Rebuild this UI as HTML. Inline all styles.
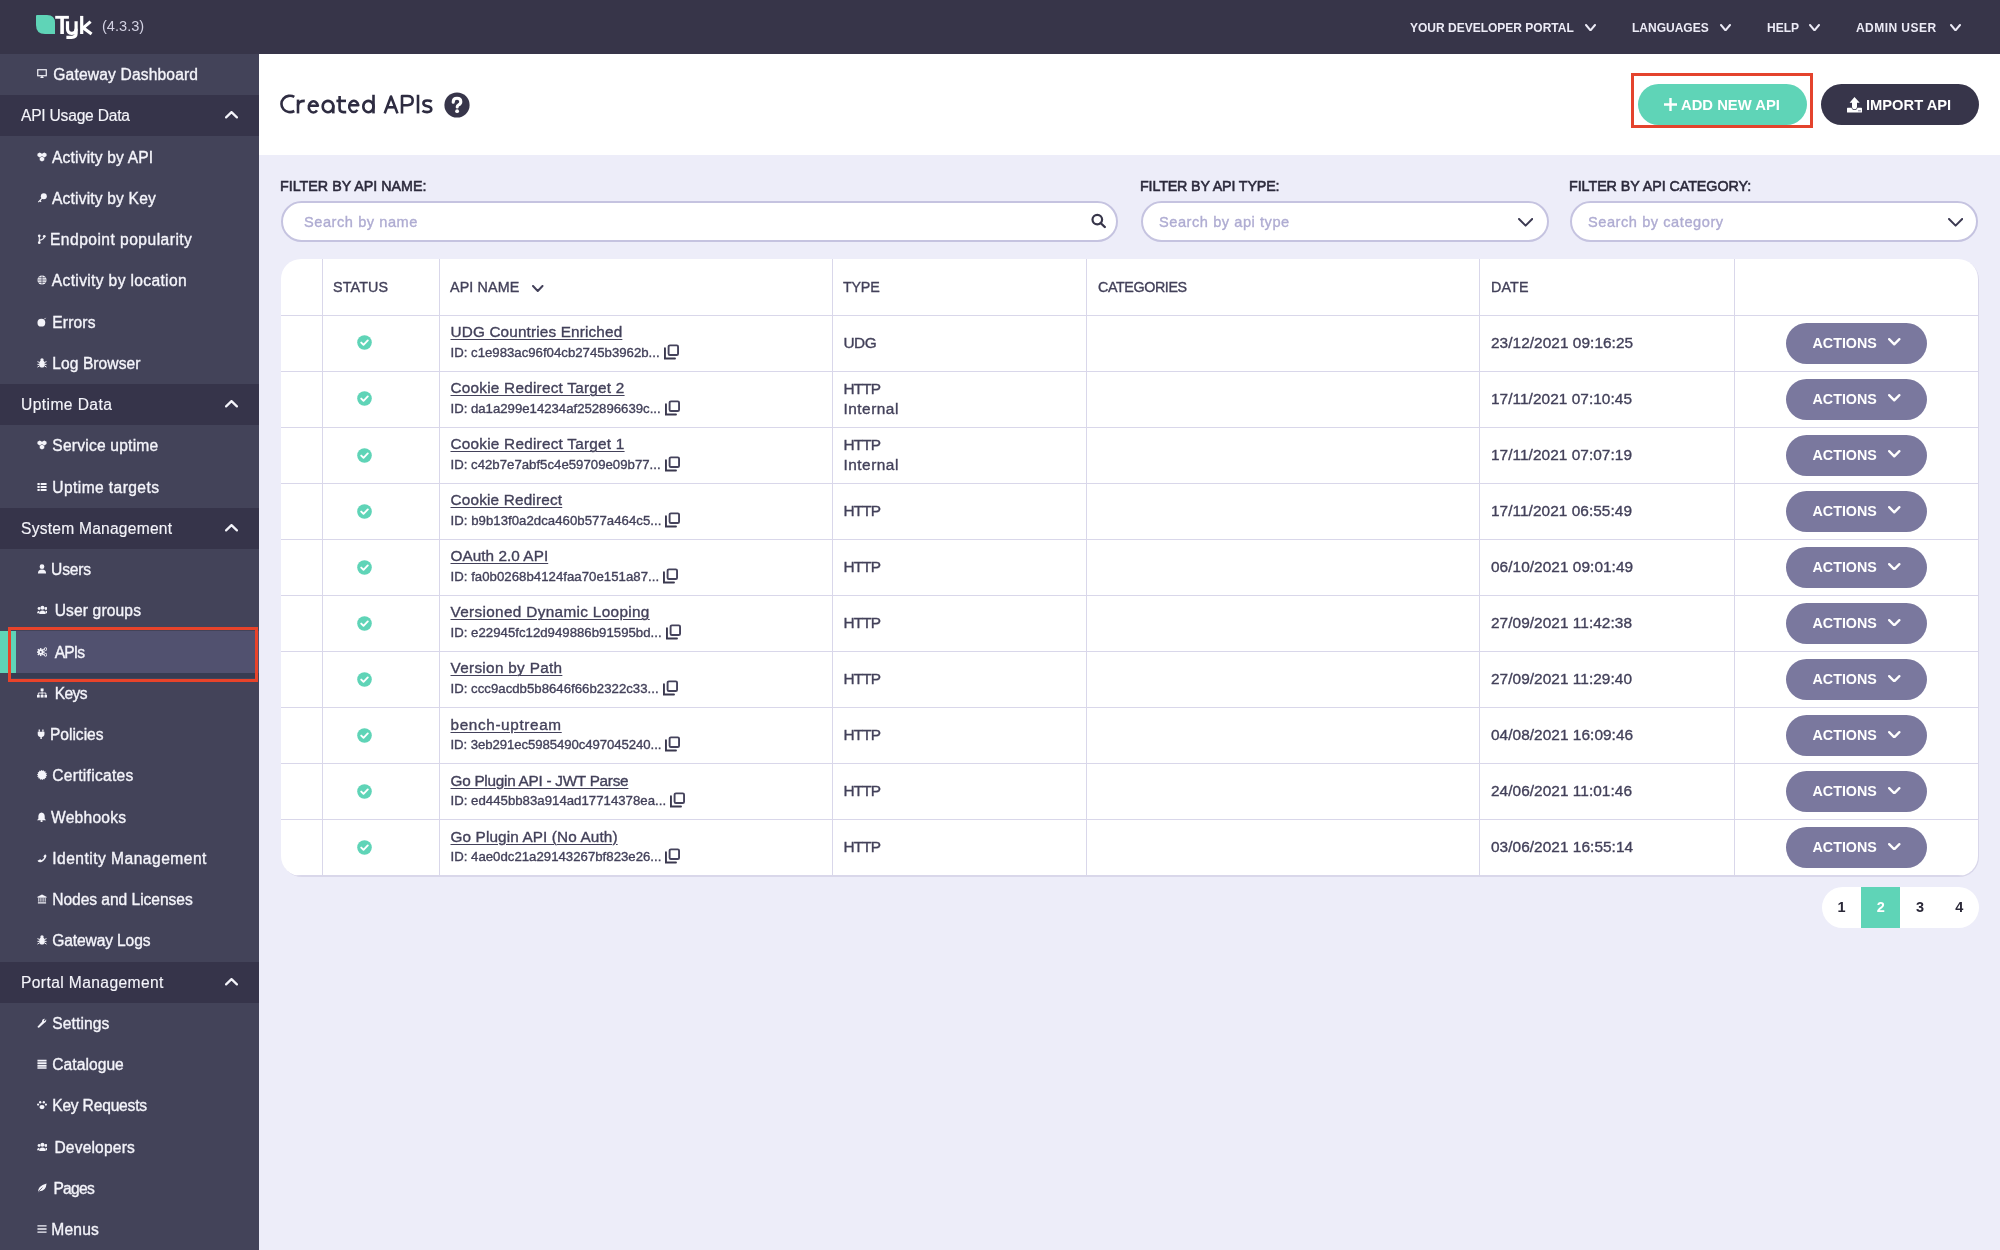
<!DOCTYPE html>
<html><head><meta charset="utf-8"><title>Created APIs</title><style>
*{box-sizing:border-box;margin:0;padding:0}
html,body{width:2000px;height:1250px;overflow:hidden;background:#ededf9;font-family:"Liberation Sans",sans-serif;-webkit-font-smoothing:antialiased}
body>div,body>svg{will-change:transform}
.si,.td,.th,.ph,.nm,.id{-webkit-text-stroke:0.35px currentColor}
.si,.th,.ph,.nm,.td{letter-spacing:0.15px}
.abs{position:absolute}
.hdr{left:0;top:0;width:2000px;height:54px;background:#373549}
.sb{left:0;top:54px;width:259px;height:1196px;background:#434359}
.si{position:absolute;left:0;width:259px;height:41.25px;color:#f4f4fa;font-size:15.6px;line-height:41.25px;white-space:nowrap}
.si .t{position:absolute;top:0}
.si .ic{position:absolute;left:37px;top:15.4px;width:10px;height:10px}
.sec{background:#36344a;font-size:15.6px;-webkit-text-stroke:0.15px currentColor !important}
.sec .t{left:21px}
.nav{position:absolute;top:1px;height:54px;line-height:54px;color:#ecebf6;font-weight:bold;font-size:12px;white-space:nowrap}
.pghdr{left:259px;top:54px;width:1741px;height:101px;background:#fff}
.lbl{position:absolute;top:176px;font-size:14.3px;color:#2c2a3c;line-height:20px;white-space:nowrap;-webkit-text-stroke:0.55px #2c2a3c}
.inp{position:absolute;top:201px;height:41px;background:#fff;border:2px solid #c5c3e0;border-radius:21px}
.ph{position:absolute;top:0.8px;line-height:37px;font-size:14.6px;color:#afacd2;white-space:nowrap;letter-spacing:0.55px !important}
.card{left:281px;top:259px;width:1697px;height:617px;background:#fff;border-radius:20px;box-shadow:1px 1px 0 #d9d7ea;overflow:hidden}
.vl{position:absolute;top:0;width:1px;height:617px;background:#d9d7ea}
.hl{position:absolute;left:0;width:1697px;height:1px;background:#d9d7ea}
.th{position:absolute;top:0;height:56px;line-height:56px;font-size:14.3px;color:#43415a;white-space:nowrap}
.td{position:absolute;font-size:15.4px;color:#43415a;white-space:nowrap}
.nm{font-size:15.3px;color:#43415a;text-decoration:underline;text-underline-offset:2px;text-decoration-thickness:1px}
.id{font-size:13.2px;color:#43415a}
.abtn{position:absolute;left:1505px;width:141px;height:41px;border-radius:21px;background:#7a789e;color:#fff;font-weight:bold;font-size:14.3px;line-height:41px}
</style></head>
<body>
<div class="abs hdr"></div>
<svg class="abs" style="left:36px;top:15px" width="20" height="20" viewBox="0 0 20 20"><path d="M1 0 H11 Q19 0 19 8 V19 H9 Q0 19 0 10 V1 Q0 0 1 0Z" fill="#5fd4b7"/></svg>
<svg class="abs" style="left:0;top:0" width="100" height="45" viewBox="0 0 100 45"><g fill="none" stroke="#fff" stroke-width="3.2"><path d="M55.2 17.3 H68.9" stroke-width="2.9"/><path d="M62.1 17.3 V34" stroke-width="3.6"/><path d="M67.5 21.3 V28.8 Q67.5 33.3 71.8 33.3 Q76.1 33.3 76.1 28.8"/><path d="M76.1 21.3 V33.6 Q76.1 37.3 71.6 37.3 H66.4"/><path d="M81.7 15.9 V34"/><path d="M90.6 21.6 L83.2 27.9 L91.6 34" stroke-linejoin="miter"/></g></svg>
<div class="abs" style="left:102px;top:16px;font-size:14.6px;color:#d2d1e2;line-height:20px">(4.3.3)</div>
<div class="nav" style="left:1409.5px;letter-spacing:0px">YOUR DEVELOPER PORTAL</div>
<svg class="abs" style="left:1584.8999999999999px;top:23.7px" width="11" height="7.4" viewBox="0 0 11 7.4"><path d="M1.0 1.0 L5.5 6.4 L10.0 1.0" fill="none" stroke="#ecebf6" stroke-width="2" stroke-linecap="round" stroke-linejoin="round"/></svg>
<div class="nav" style="left:1632px;letter-spacing:0px">LANGUAGES</div>
<svg class="abs" style="left:1719.7px;top:23.7px" width="11" height="7.4" viewBox="0 0 11 7.4"><path d="M1.0 1.0 L5.5 6.4 L10.0 1.0" fill="none" stroke="#ecebf6" stroke-width="2" stroke-linecap="round" stroke-linejoin="round"/></svg>
<div class="nav" style="left:1767px;letter-spacing:0px">HELP</div>
<svg class="abs" style="left:1809.3px;top:23.7px" width="11" height="7.4" viewBox="0 0 11 7.4"><path d="M1.0 1.0 L5.5 6.4 L10.0 1.0" fill="none" stroke="#ecebf6" stroke-width="2" stroke-linecap="round" stroke-linejoin="round"/></svg>
<div class="nav" style="left:1856px;letter-spacing:0.45px">ADMIN USER</div>
<svg class="abs" style="left:1950.0px;top:23.7px" width="11" height="7.4" viewBox="0 0 11 7.4"><path d="M1.0 1.0 L5.5 6.4 L10.0 1.0" fill="none" stroke="#ecebf6" stroke-width="2" stroke-linecap="round" stroke-linejoin="round"/></svg>
<div class="abs sb"></div>
<div class="si" style="top:54.0px"><svg class="ic" viewBox="0 0 11 11"><rect x="0.8" y="0.8" width="9.4" height="6.6" fill="none" stroke="#f4f4fa" stroke-width="1.3"/><path d="M3.5 10 H7.5 L6.5 8 H4.5Z" fill="#f4f4fa"/></svg><span class="t" style="left:53.3px;letter-spacing:0.162px">Gateway Dashboard</span></div>
<div class="si sec" style="top:95.25px"><span class="t" style="letter-spacing:-0.223px">API Usage Data</span></div>
<svg class="abs" style="left:225px;top:111.35px" width="13" height="7.5" viewBox="0 0 13 7.5"><path d="M1.1 6.4 L6.5 1.1 L11.9 6.4" fill="none" stroke="#f4f4fa" stroke-width="2.2" stroke-linecap="round" stroke-linejoin="round"/></svg>
<div class="si" style="top:136.5px"><svg class="ic" viewBox="0 0 11 11"><path d="M3 0.5 L5.5 2 V4.5 L3 6 L0.5 4.5 V2Z M8 0.5 L10.5 2 V4.5 L8 6 L5.5 4.5 V2Z M5.5 5 L8 6.5 V9 L5.5 10.5 L3 9 V6.5Z" fill="#f4f4fa"/></svg><span class="t" style="left:52px;letter-spacing:0.171px">Activity by API</span></div>
<div class="si" style="top:177.75px"><svg class="ic" viewBox="0 0 11 11"><circle cx="7.5" cy="3.5" r="3.3" fill="#f4f4fa"/><path d="M5.5 5 L1 9.5 L1.8 10.5 L3 9.3 L4 10.2 L5 9.2 L4 8.3 L6.5 5.8Z" fill="#f4f4fa"/></svg><span class="t" style="left:52px;letter-spacing:0.171px">Activity by Key</span></div>
<div class="si" style="top:219.0px"><svg class="ic" viewBox="0 0 11 11"><circle cx="2.5" cy="2" r="1.5" fill="#f4f4fa"/><circle cx="2.5" cy="9.5" r="1.5" fill="#f4f4fa"/><circle cx="8" cy="2.5" r="1.5" fill="#f4f4fa"/><path d="M2.5 2 V9.5 M8 2.5 Q8 6 2.5 7" fill="none" stroke="#f4f4fa" stroke-width="1.2"/></svg><span class="t" style="left:50px;letter-spacing:0.467px">Endpoint popularity</span></div>
<div class="si" style="top:260.25px"><svg class="ic" viewBox="0 0 11 11"><circle cx="5.5" cy="5.5" r="5" fill="#f4f4fa"/><path d="M0.5 5.5 H10.5 M5.5 0.5 V10.5 M1.5 3 H9.5 M1.5 8 H9.5" stroke="#434359" stroke-width="0.8"/></svg><span class="t" style="left:51.8px;letter-spacing:0.345px">Activity by location</span></div>
<div class="si" style="top:301.5px"><svg class="ic" viewBox="0 0 11 11"><circle cx="4.8" cy="6.2" r="4.3" fill="#f4f4fa"/><path d="M8 2.5 L9.5 1" stroke="#f4f4fa" stroke-width="1"/></svg><span class="t" style="left:52.3px;letter-spacing:0.150px">Errors</span></div>
<div class="si" style="top:342.75px"><svg class="ic" viewBox="0 0 11 11"><ellipse cx="5.5" cy="6.5" rx="3" ry="4" fill="#f4f4fa"/><path d="M0.5 4 L3 5 M10.5 4 L8 5 M0.5 7 H3 M10.5 7 H8 M0.5 10 L3 8.5 M10.5 10 L8 8.5" stroke="#f4f4fa" stroke-width="1.1"/><circle cx="5.5" cy="2" r="1.8" fill="#f4f4fa"/></svg><span class="t" style="left:52.3px;letter-spacing:0.060px">Log Browser</span></div>
<div class="si sec" style="top:384.0px"><span class="t" style="letter-spacing:0.420px">Uptime Data</span></div>
<svg class="abs" style="left:225px;top:400.1px" width="13" height="7.5" viewBox="0 0 13 7.5"><path d="M1.1 6.4 L6.5 1.1 L11.9 6.4" fill="none" stroke="#f4f4fa" stroke-width="2.2" stroke-linecap="round" stroke-linejoin="round"/></svg>
<div class="si" style="top:425.25px"><svg class="ic" viewBox="0 0 11 11"><path d="M3 0.5 L5.5 2 V4.5 L3 6 L0.5 4.5 V2Z M8 0.5 L10.5 2 V4.5 L8 6 L5.5 4.5 V2Z M5.5 5 L8 6.5 V9 L5.5 10.5 L3 9 V6.5Z" fill="#f4f4fa"/></svg><span class="t" style="left:52.3px;letter-spacing:0.212px">Service uptime</span></div>
<div class="si" style="top:466.5px"><svg class="ic" viewBox="0 0 11 11"><path d="M0.5 1 H3 V3.3 H0.5Z M4 1 H10.5 V3.3 H4Z M0.5 4.4 H3 V6.7 H0.5Z M4 4.4 H10.5 V6.7 H4Z M0.5 7.8 H3 V10 H0.5Z M4 7.8 H10.5 V10 H4Z" fill="#f4f4fa"/></svg><span class="t" style="left:52.3px;letter-spacing:0.404px">Uptime targets</span></div>
<div class="si sec" style="top:507.75px"><span class="t" style="letter-spacing:0.231px">System Management</span></div>
<svg class="abs" style="left:225px;top:523.85px" width="13" height="7.5" viewBox="0 0 13 7.5"><path d="M1.1 6.4 L6.5 1.1 L11.9 6.4" fill="none" stroke="#f4f4fa" stroke-width="2.2" stroke-linecap="round" stroke-linejoin="round"/></svg>
<div class="si" style="top:549.0px"><svg class="ic" viewBox="0 0 11 11"><circle cx="5.5" cy="3" r="2.6" fill="#f4f4fa"/><path d="M1 10.5 Q1 6 5.5 6 Q10 6 10 10.5Z" fill="#f4f4fa"/></svg><span class="t" style="left:51.1px;letter-spacing:-0.200px">Users</span></div>
<div class="si" style="top:590.25px"><svg class="ic" viewBox="0 0 11 11"><circle cx="6" cy="3" r="2.2" fill="#f4f4fa"/><circle cx="2.3" cy="3.8" r="1.6" fill="#f4f4fa"/><circle cx="9.8" cy="3.8" r="1.6" fill="#f4f4fa"/><path d="M2.5 10 Q2.5 6 6 6 Q9.5 6 9.5 10Z M0 9 Q0 6.2 2.5 6.2 L2.5 9Z M12 9 Q12 6.2 9.5 6.2 L9.5 9Z" fill="#f4f4fa"/></svg><span class="t" style="left:54.7px;letter-spacing:0.130px">User groups</span></div>
<div class="abs" style="left:0;top:631.0px;width:16px;height:42px;background:#5fd4b7"></div>
<div class="abs" style="left:16px;top:631.0px;width:243px;height:42px;background:#51516f"></div>
<div class="abs" style="left:10px;top:673.0px;width:245px;height:5px;background:#373c52"></div>
<div class="abs" style="left:7.5px;top:627.25px;width:250px;height:54.5px;border:3px solid #e8432a"></div>
<div class="si" style="top:631.5px"><svg class="ic" viewBox="0 0 11 11"><rect x="3.3" y="1.2" width="1.6" height="2" transform="rotate(0 4.1 5.6)" fill="#f4f4fa"/><rect x="3.3" y="1.2" width="1.6" height="2" transform="rotate(45 4.1 5.6)" fill="#f4f4fa"/><rect x="3.3" y="1.2" width="1.6" height="2" transform="rotate(90 4.1 5.6)" fill="#f4f4fa"/><rect x="3.3" y="1.2" width="1.6" height="2" transform="rotate(135 4.1 5.6)" fill="#f4f4fa"/><rect x="3.3" y="1.2" width="1.6" height="2" transform="rotate(180 4.1 5.6)" fill="#f4f4fa"/><rect x="3.3" y="1.2" width="1.6" height="2" transform="rotate(225 4.1 5.6)" fill="#f4f4fa"/><rect x="3.3" y="1.2" width="1.6" height="2" transform="rotate(270 4.1 5.6)" fill="#f4f4fa"/><rect x="3.3" y="1.2" width="1.6" height="2" transform="rotate(315 4.1 5.6)" fill="#f4f4fa"/><circle cx="4.1" cy="5.6" r="3" fill="#f4f4fa"/><circle cx="4.1" cy="5.6" r="1.1" fill="#51516f"/><circle cx="9.4" cy="2.3" r="1.5" fill="none" stroke="#f4f4fa" stroke-width="1.1"/><circle cx="9.4" cy="8.6" r="1.5" fill="none" stroke="#f4f4fa" stroke-width="1.1"/></svg><span class="t" style="left:54.7px;letter-spacing:-0.850px">APIs</span></div>
<div class="si" style="top:672.75px"><svg class="ic" viewBox="0 0 11 11"><rect x="4" y="0.5" width="3.2" height="3" fill="#f4f4fa"/><rect x="0" y="7.5" width="3" height="3" fill="#f4f4fa"/><rect x="4" y="7.5" width="3.2" height="3" fill="#f4f4fa"/><rect x="8.2" y="7.5" width="3" height="3" fill="#f4f4fa"/><path d="M5.6 3.5 V7.5 M1.5 7.5 V5.5 H9.7 V7.5" fill="none" stroke="#f4f4fa" stroke-width="1"/></svg><span class="t" style="left:54.7px;letter-spacing:-0.583px">Keys</span></div>
<div class="si" style="top:714.0px"><svg class="ic" viewBox="0 0 11 11"><path d="M2.5 0.5 V3 M6.5 0.5 V3" stroke="#f4f4fa" stroke-width="1.4"/><path d="M0.8 3 H8.2 V5.5 Q8.2 8.5 5.3 8.8 V11 H3.7 V8.8 Q0.8 8.5 0.8 5.5Z" fill="#f4f4fa"/></svg><span class="t" style="left:49.9px;letter-spacing:-0.007px">Policies</span></div>
<div class="si" style="top:755.25px"><svg class="ic" viewBox="0 0 11 11"><circle cx="5.5" cy="5.5" r="4.6" fill="#f4f4fa" stroke="#f4f4fa" stroke-width="1.4" stroke-dasharray="1.2 0.8"/></svg><span class="t" style="left:52.3px;letter-spacing:0.277px">Certificates</span></div>
<div class="si" style="top:796.5px"><svg class="ic" viewBox="0 0 11 11"><path d="M5 0.5 Q8.5 1 8.5 5 V7.5 L10 9 H0 L1.5 7.5 V5 Q1.5 1 5 0.5Z" fill="#f4f4fa"/><circle cx="5" cy="10" r="1.2" fill="#f4f4fa"/></svg><span class="t" style="left:51.1px;letter-spacing:0.207px">Webhooks</span></div>
<div class="si" style="top:837.75px"><svg class="ic" viewBox="0 0 11 11"><path d="M0.5 8.5 Q2 11 5 10 Q9 8 10.5 3 L9 1.5 L7 3.5 L8 5 Q7 7 5 8 L3.5 7 Z" fill="#f4f4fa"/></svg><span class="t" style="left:52.2px;letter-spacing:0.478px">Identity Management</span></div>
<div class="si" style="top:879.0px"><svg class="ic" viewBox="0 0 11 11"><path d="M5.5 0.5 L10.5 3 V4 H0.5 V3Z M1 9 H10 V10.5 H1Z" fill="#f4f4fa"/><path d="M2 4.5 V8.5 M4.3 4.5 V8.5 M6.7 4.5 V8.5 M9 4.5 V8.5" stroke="#f4f4fa" stroke-width="1.1"/></svg><span class="t" style="left:52.2px;letter-spacing:-0.044px">Nodes and Licenses</span></div>
<div class="si" style="top:920.25px"><svg class="ic" viewBox="0 0 11 11"><ellipse cx="5.5" cy="6.5" rx="3" ry="4" fill="#f4f4fa"/><path d="M0.5 4 L3 5 M10.5 4 L8 5 M0.5 7 H3 M10.5 7 H8 M0.5 10 L3 8.5 M10.5 10 L8 8.5" stroke="#f4f4fa" stroke-width="1.1"/><circle cx="5.5" cy="2" r="1.8" fill="#f4f4fa"/></svg><span class="t" style="left:52.2px;letter-spacing:-0.123px">Gateway Logs</span></div>
<div class="si sec" style="top:961.5px"><span class="t" style="letter-spacing:0.394px">Portal Management</span></div>
<svg class="abs" style="left:225px;top:977.6px" width="13" height="7.5" viewBox="0 0 13 7.5"><path d="M1.1 6.4 L6.5 1.1 L11.9 6.4" fill="none" stroke="#f4f4fa" stroke-width="2.2" stroke-linecap="round" stroke-linejoin="round"/></svg>
<div class="si" style="top:1002.75px"><svg class="ic" viewBox="0 0 11 11"><path d="M10 1.5 Q10.8 4.5 8 5.5 L2.5 10.5 Q1 11 0.5 9.5 L5.5 4 Q5.5 0.5 9 0.8 L7.5 2.5 L8.5 3.5Z" fill="#f4f4fa"/></svg><span class="t" style="left:52.2px;letter-spacing:0.121px">Settings</span></div>
<div class="si" style="top:1044.0px"><svg class="ic" viewBox="0 0 11 11"><path d="M0.5 0.8 H10.5 V2.8 H0.5Z M0.5 3.6 H10.5 V5.6 H0.5Z M0.5 6.4 H10.5 V8.4 H0.5Z M0.5 9.2 H10.5 V10.8 H0.5Z" fill="#f4f4fa"/></svg><span class="t" style="left:52.2px;letter-spacing:0.063px">Catalogue</span></div>
<div class="si" style="top:1085.25px"><svg class="ic" viewBox="0 0 11 11"><ellipse cx="5.5" cy="7.8" rx="2.8" ry="2.3" fill="#f4f4fa"/><circle cx="3.5" cy="2.5" r="1.3" fill="#f4f4fa"/><circle cx="7.5" cy="2.5" r="1.3" fill="#f4f4fa"/><circle cx="1.2" cy="5" r="1.2" fill="#f4f4fa"/><circle cx="9.8" cy="5" r="1.2" fill="#f4f4fa"/></svg><span class="t" style="left:52.2px;letter-spacing:-0.195px">Key Requests</span></div>
<div class="si" style="top:1126.5px"><svg class="ic" viewBox="0 0 11 11"><circle cx="6" cy="3" r="2.2" fill="#f4f4fa"/><circle cx="2.3" cy="3.8" r="1.6" fill="#f4f4fa"/><circle cx="9.8" cy="3.8" r="1.6" fill="#f4f4fa"/><path d="M2.5 10 Q2.5 6 6 6 Q9.5 6 9.5 10Z M0 9 Q0 6.2 2.5 6.2 L2.5 9Z M12 9 Q12 6.2 9.5 6.2 L9.5 9Z" fill="#f4f4fa"/></svg><span class="t" style="left:54.4px;letter-spacing:0.172px">Developers</span></div>
<div class="si" style="top:1167.75px"><svg class="ic" viewBox="0 0 11 11"><path d="M1 10.5 Q0.5 3 10.5 0.5 Q10 9 2.5 9Z" fill="#f4f4fa"/><path d="M0.5 10.5 L6 5" stroke="#434359" stroke-width="0.8"/></svg><span class="t" style="left:53.4px;letter-spacing:-0.725px">Pages</span></div>
<div class="si" style="top:1209.0px"><svg class="ic" viewBox="0 0 11 11"><path d="M0.5 2 H10.5 M0.5 5.5 H10.5 M0.5 9 H10.5" stroke="#f4f4fa" stroke-width="1.5"/></svg><span class="t" style="left:51.2px;letter-spacing:0.225px">Menus</span></div>
<div class="abs pghdr"></div>
<svg class="abs" style="left:276px;top:90px" width="162" height="28" viewBox="0 0 162 28"><g fill="none" stroke="#2e2c41" stroke-width="2.6" stroke-linejoin="round"><path d="M18.3 6.9 A8.5 8.2 0 1 0 18.3 21.0"/><path d="M22 9.6 V23.4"/><path d="M22 15.2 Q22 10.9 28.8 10.9"/><path d="M32.7 15.8 H41.9 A4.6 5.6 0 1 0 41.0 20.4"/><path d="M57.3 16.5 A5.3 5.6 0 1 0 57.3 16.6"/><path d="M57.3 15.2 V23.4"/><path d="M63.6 6 V18.6 Q63.6 22.1 67.4 22.1 H70.2"/><path d="M60.4 10.9 H70"/><path d="M73.1 15.2 H82.3 A4.6 5.6 0 1 0 81.4 19.9"/><path d="M97.5 16.5 A5.1 5.6 0 1 0 97.5 16.6"/><path d="M97.5 4.75 V23.4"/><path d="M108.7 23.4 L115 6.5 L121.5 23.4"/><path d="M111.2 17.3 H118.8"/><path d="M126 23.4 V6.05 H131.5 Q136.7 6.05 136.7 10.6 Q136.7 15.2 131.5 15.2 H126"/><path d="M142 4.75 V23.4"/><path d="M155.7 11.6 Q154.2 10.5 151.1 10.5 Q147.4 10.5 147.4 13.3 Q147.4 15.7 151.3 16.3 Q155.3 16.9 155.3 19.3 Q155.3 22.1 151.1 22.1 Q148.2 22.1 146.4 20.7"/></g></svg>
<svg class="abs" style="left:444px;top:92px" width="26" height="26" viewBox="0 0 26 26"><circle cx="13" cy="13" r="12.6" fill="#37354a"/><path d="M9.2 10.2 Q9.2 6.3 13 6.3 Q16.8 6.3 16.8 9.7 Q16.8 11.7 14.6 12.8 Q13.2 13.5 13.2 15" fill="none" stroke="#fff" stroke-width="3.1" stroke-linecap="round"/><circle cx="13.1" cy="19.2" r="1.9" fill="#fff"/></svg>
<div class="abs" style="left:1637.5px;top:84px;width:169px;height:41px;border-radius:21px;background:#5fd4b7"></div>
<svg class="abs" style="left:1664px;top:98px" width="13" height="13" viewBox="0 0 13 13"><path d="M6.5 0 V13 M0 6.5 H13" stroke="#fff" stroke-width="2.4"/></svg>
<div class="abs" style="left:1681px;top:94px;font-size:14.8px;font-weight:bold;color:#fff;line-height:22px;white-space:nowrap">ADD NEW API</div>
<div class="abs" style="left:1631px;top:73px;width:182px;height:55px;border:3px solid #e4432d"></div>
<div class="abs" style="left:1821px;top:84px;width:157.5px;height:41px;border-radius:21px;background:#37354a"></div>
<svg class="abs" style="left:1846px;top:96px" width="17" height="17" viewBox="0 0 17 17"><rect x="1" y="11.8" width="15" height="4.8" rx="0.6" fill="#fff"/><rect x="5.5" y="5.5" width="6" height="8.5" rx="3" fill="#37354a"/><path d="M3.6 6.8 L8.5 1 L13.7 6.8 H11 V11 Q11 13.2 8.5 13.2 Q6 13.2 6 11 V6.8Z" fill="#fff"/><rect x="12" y="14.3" width="3" height="1" fill="#8e8ca3"/></svg>
<div class="abs" style="left:1866px;top:94px;font-size:14.7px;font-weight:bold;color:#fff;line-height:22px;white-space:nowrap">IMPORT API</div>
<div class="lbl" style="left:280px">FILTER BY API NAME:</div>
<div class="lbl" style="left:1139.5px;letter-spacing:-0.15px">FILTER BY API TYPE:</div>
<div class="lbl" style="left:1569px;letter-spacing:-0.05px">FILTER BY API CATEGORY:</div>
<div class="inp" style="left:281px;width:837px"><span class="ph" style="left:21px">Search by name</span></div>
<svg class="abs" style="left:1090px;top:213px" width="16" height="16" viewBox="0 0 16 16"><circle cx="7.3" cy="6.6" r="4.8" fill="none" stroke="#37354a" stroke-width="2.2"/><path d="M10.6 10 L14.8 14" stroke="#37354a" stroke-width="2.4" stroke-linecap="round"/></svg>
<div class="inp" style="left:1140.5px;width:408px"><span class="ph" style="left:16px">Search by api type</span></div>
<svg class="abs" style="left:1518.3px;top:218px" width="15.2" height="8.6" viewBox="0 0 15.2 8.6"><path d="M1.0 1.0 L7.6 7.6 L14.2 1.0" fill="none" stroke="#3b3951" stroke-width="2.0" stroke-linecap="round" stroke-linejoin="round"/></svg>
<div class="inp" style="left:1570px;width:408px"><span class="ph" style="left:16px">Search by category</span></div>
<svg class="abs" style="left:1947.8px;top:218px" width="15.2" height="8.6" viewBox="0 0 15.2 8.6"><path d="M1.0 1.0 L7.6 7.6 L14.2 1.0" fill="none" stroke="#3b3951" stroke-width="2.0" stroke-linecap="round" stroke-linejoin="round"/></svg>
<div class="abs card"><div class="vl" style="left:41px"></div><div class="vl" style="left:158px"></div><div class="vl" style="left:551px"></div><div class="vl" style="left:805px"></div><div class="vl" style="left:1198px"></div><div class="vl" style="left:1453px"></div><div class="th" style="left:52px">STATUS</div><div class="th" style="left:169px">API NAME</div><svg class="abs" style="left:251px;top:25.5px" width="11.5" height="7" viewBox="0 0 11.5 7"><path d="M1.0 1.0 L5.75 6.0 L10.5 1.0" fill="none" stroke="#43415a" stroke-width="2" stroke-linecap="round" stroke-linejoin="round"/></svg><div class="th" style="left:562px;letter-spacing:-0.2px">TYPE</div><div class="th" style="left:817px;letter-spacing:-0.4px">CATEGORIES</div><div class="th" style="left:1210px">DATE</div><div class="hl" style="top:56px"></div><svg class="abs" style="left:76px;top:76.45px" width="15" height="15" viewBox="0 0 15 15"><circle cx="7.5" cy="7.5" r="7.3" fill="#5fd4b7"/><path d="M4.2 7.6 L6.5 9.8 L10.8 5.4" fill="none" stroke="#fff" stroke-width="1.9" stroke-linecap="round" stroke-linejoin="round"/></svg><div class="td nm" style="left:169.5px;top:63.25px;line-height:20px;letter-spacing:0.16px">UDG Countries Enriched</div><div class="td id" style="left:169.5px;top:83.75px;line-height:20px;letter-spacing:0.004px">ID: c1e983ac96f04cb2745b3962b...</div><svg class="abs" style="left:382.65px;top:84.75px" width="16" height="16" viewBox="0 0 16 16"><rect x="4.6" y="1.4" width="9.45" height="9.6" rx="1.3" fill="none" stroke="#45435c" stroke-width="1.9"/><path d="M0.95 4.25 V14.55 H11" fill="none" stroke="#3a384e" stroke-width="1.9" stroke-linecap="round"/></svg><div class="td" style="left:562.5px;top:73.75px;line-height:20px"><span style="letter-spacing:-0.5px">UDG</span></div><div class="td" style="left:1210px;top:73.75px;line-height:20px;letter-spacing:0.05px">23/12/2021 09:16:25</div><div class="abtn" style="top:63.75px"><span class="abs" style="left:26.5px">ACTIONS</span></div><svg class="abs" style="left:1607px;top:79.35px" width="12.5" height="7.5" viewBox="0 0 12.5 7.5"><path d="M1.15 1.15 L6.25 6.35 L11.35 1.15" fill="none" stroke="#fff" stroke-width="2.3" stroke-linecap="round" stroke-linejoin="round"/></svg><div class="hl" style="top:112px"></div><svg class="abs" style="left:76px;top:132.48999999999998px" width="15" height="15" viewBox="0 0 15 15"><circle cx="7.5" cy="7.5" r="7.3" fill="#5fd4b7"/><path d="M4.2 7.6 L6.5 9.8 L10.8 5.4" fill="none" stroke="#fff" stroke-width="1.9" stroke-linecap="round" stroke-linejoin="round"/></svg><div class="td nm" style="left:169.5px;top:119.28999999999999px;line-height:20px;letter-spacing:0.25px">Cookie Redirect Target 2</div><div class="td id" style="left:169.5px;top:139.79px;line-height:20px;letter-spacing:-0.011px">ID: da1a299e14234af252896639c...</div><svg class="abs" style="left:383.65px;top:140.79px" width="16" height="16" viewBox="0 0 16 16"><rect x="4.6" y="1.4" width="9.45" height="9.6" rx="1.3" fill="none" stroke="#45435c" stroke-width="1.9"/><path d="M0.95 4.25 V14.55 H11" fill="none" stroke="#3a384e" stroke-width="1.9" stroke-linecap="round"/></svg><div class="td" style="left:562.5px;top:120.28999999999999px;line-height:20px"><span style="letter-spacing:-0.85px">HTTP</span><br><span style="letter-spacing:0.5px">Internal</span></div><div class="td" style="left:1210px;top:129.79px;line-height:20px;letter-spacing:0.05px">17/11/2021 07:10:45</div><div class="abtn" style="top:119.78999999999999px"><span class="abs" style="left:26.5px">ACTIONS</span></div><svg class="abs" style="left:1607px;top:135.39px" width="12.5" height="7.5" viewBox="0 0 12.5 7.5"><path d="M1.15 1.15 L6.25 6.35 L11.35 1.15" fill="none" stroke="#fff" stroke-width="2.3" stroke-linecap="round" stroke-linejoin="round"/></svg><div class="hl" style="top:168px"></div><svg class="abs" style="left:76px;top:188.52999999999997px" width="15" height="15" viewBox="0 0 15 15"><circle cx="7.5" cy="7.5" r="7.3" fill="#5fd4b7"/><path d="M4.2 7.6 L6.5 9.8 L10.8 5.4" fill="none" stroke="#fff" stroke-width="1.9" stroke-linecap="round" stroke-linejoin="round"/></svg><div class="td nm" style="left:169.5px;top:175.32999999999998px;line-height:20px;letter-spacing:0.25px">Cookie Redirect Target 1</div><div class="td id" style="left:169.5px;top:195.82999999999998px;line-height:20px;letter-spacing:0.012px">ID: c42b7e7abf5c4e59709e09b77...</div><svg class="abs" style="left:383.65px;top:196.82999999999998px" width="16" height="16" viewBox="0 0 16 16"><rect x="4.6" y="1.4" width="9.45" height="9.6" rx="1.3" fill="none" stroke="#45435c" stroke-width="1.9"/><path d="M0.95 4.25 V14.55 H11" fill="none" stroke="#3a384e" stroke-width="1.9" stroke-linecap="round"/></svg><div class="td" style="left:562.5px;top:176.32999999999998px;line-height:20px"><span style="letter-spacing:-0.85px">HTTP</span><br><span style="letter-spacing:0.5px">Internal</span></div><div class="td" style="left:1210px;top:185.82999999999998px;line-height:20px;letter-spacing:0.05px">17/11/2021 07:07:19</div><div class="abtn" style="top:175.82999999999998px"><span class="abs" style="left:26.5px">ACTIONS</span></div><svg class="abs" style="left:1607px;top:191.42999999999998px" width="12.5" height="7.5" viewBox="0 0 12.5 7.5"><path d="M1.15 1.15 L6.25 6.35 L11.35 1.15" fill="none" stroke="#fff" stroke-width="2.3" stroke-linecap="round" stroke-linejoin="round"/></svg><div class="hl" style="top:224px"></div><svg class="abs" style="left:76px;top:244.57px" width="15" height="15" viewBox="0 0 15 15"><circle cx="7.5" cy="7.5" r="7.3" fill="#5fd4b7"/><path d="M4.2 7.6 L6.5 9.8 L10.8 5.4" fill="none" stroke="#fff" stroke-width="1.9" stroke-linecap="round" stroke-linejoin="round"/></svg><div class="td nm" style="left:169.5px;top:231.37px;line-height:20px;letter-spacing:0.193px">Cookie Redirect</div><div class="td id" style="left:169.5px;top:251.87px;line-height:20px;letter-spacing:0.038px">ID: b9b13f0a2dca460b577a464c5...</div><svg class="abs" style="left:384.44999999999993px;top:252.87px" width="16" height="16" viewBox="0 0 16 16"><rect x="4.6" y="1.4" width="9.45" height="9.6" rx="1.3" fill="none" stroke="#45435c" stroke-width="1.9"/><path d="M0.95 4.25 V14.55 H11" fill="none" stroke="#3a384e" stroke-width="1.9" stroke-linecap="round"/></svg><div class="td" style="left:562.5px;top:241.87px;line-height:20px"><span style="letter-spacing:-0.85px">HTTP</span></div><div class="td" style="left:1210px;top:241.87px;line-height:20px;letter-spacing:0.05px">17/11/2021 06:55:49</div><div class="abtn" style="top:231.87px"><span class="abs" style="left:26.5px">ACTIONS</span></div><svg class="abs" style="left:1607px;top:247.47px" width="12.5" height="7.5" viewBox="0 0 12.5 7.5"><path d="M1.15 1.15 L6.25 6.35 L11.35 1.15" fill="none" stroke="#fff" stroke-width="2.3" stroke-linecap="round" stroke-linejoin="round"/></svg><div class="hl" style="top:280px"></div><svg class="abs" style="left:76px;top:300.60999999999996px" width="15" height="15" viewBox="0 0 15 15"><circle cx="7.5" cy="7.5" r="7.3" fill="#5fd4b7"/><path d="M4.2 7.6 L6.5 9.8 L10.8 5.4" fill="none" stroke="#fff" stroke-width="1.9" stroke-linecap="round" stroke-linejoin="round"/></svg><div class="td nm" style="left:169.5px;top:287.40999999999997px;line-height:20px;letter-spacing:0.058px">OAuth 2.0 API</div><div class="td id" style="left:169.5px;top:307.90999999999997px;line-height:20px;letter-spacing:0.034px">ID: fa0b0268b4124faa70e151a87...</div><svg class="abs" style="left:382.15px;top:308.90999999999997px" width="16" height="16" viewBox="0 0 16 16"><rect x="4.6" y="1.4" width="9.45" height="9.6" rx="1.3" fill="none" stroke="#45435c" stroke-width="1.9"/><path d="M0.95 4.25 V14.55 H11" fill="none" stroke="#3a384e" stroke-width="1.9" stroke-linecap="round"/></svg><div class="td" style="left:562.5px;top:297.90999999999997px;line-height:20px"><span style="letter-spacing:-0.85px">HTTP</span></div><div class="td" style="left:1210px;top:297.90999999999997px;line-height:20px;letter-spacing:0.05px">06/10/2021 09:01:49</div><div class="abtn" style="top:287.90999999999997px"><span class="abs" style="left:26.5px">ACTIONS</span></div><svg class="abs" style="left:1607px;top:303.51px" width="12.5" height="7.5" viewBox="0 0 12.5 7.5"><path d="M1.15 1.15 L6.25 6.35 L11.35 1.15" fill="none" stroke="#fff" stroke-width="2.3" stroke-linecap="round" stroke-linejoin="round"/></svg><div class="hl" style="top:336px"></div><svg class="abs" style="left:76px;top:356.65px" width="15" height="15" viewBox="0 0 15 15"><circle cx="7.5" cy="7.5" r="7.3" fill="#5fd4b7"/><path d="M4.2 7.6 L6.5 9.8 L10.8 5.4" fill="none" stroke="#fff" stroke-width="1.9" stroke-linecap="round" stroke-linejoin="round"/></svg><div class="td nm" style="left:169.5px;top:343.45px;line-height:20px;letter-spacing:0.35px">Versioned Dynamic Looping</div><div class="td id" style="left:169.5px;top:363.95px;line-height:20px;letter-spacing:0.021px">ID: e22945fc12d949886b91595bd...</div><svg class="abs" style="left:384.65px;top:364.95px" width="16" height="16" viewBox="0 0 16 16"><rect x="4.6" y="1.4" width="9.45" height="9.6" rx="1.3" fill="none" stroke="#45435c" stroke-width="1.9"/><path d="M0.95 4.25 V14.55 H11" fill="none" stroke="#3a384e" stroke-width="1.9" stroke-linecap="round"/></svg><div class="td" style="left:562.5px;top:353.95px;line-height:20px"><span style="letter-spacing:-0.85px">HTTP</span></div><div class="td" style="left:1210px;top:353.95px;line-height:20px;letter-spacing:0.05px">27/09/2021 11:42:38</div><div class="abtn" style="top:343.95px"><span class="abs" style="left:26.5px">ACTIONS</span></div><svg class="abs" style="left:1607px;top:359.55px" width="12.5" height="7.5" viewBox="0 0 12.5 7.5"><path d="M1.15 1.15 L6.25 6.35 L11.35 1.15" fill="none" stroke="#fff" stroke-width="2.3" stroke-linecap="round" stroke-linejoin="round"/></svg><div class="hl" style="top:392px"></div><svg class="abs" style="left:76px;top:412.69px" width="15" height="15" viewBox="0 0 15 15"><circle cx="7.5" cy="7.5" r="7.3" fill="#5fd4b7"/><path d="M4.2 7.6 L6.5 9.8 L10.8 5.4" fill="none" stroke="#fff" stroke-width="1.9" stroke-linecap="round" stroke-linejoin="round"/></svg><div class="td nm" style="left:169.5px;top:399.49px;line-height:20px;letter-spacing:0.314px">Version by Path</div><div class="td id" style="left:169.5px;top:419.99px;line-height:20px;letter-spacing:0.019px">ID: ccc9acdb5b8646f66b2322c33...</div><svg class="abs" style="left:381.65px;top:420.99px" width="16" height="16" viewBox="0 0 16 16"><rect x="4.6" y="1.4" width="9.45" height="9.6" rx="1.3" fill="none" stroke="#45435c" stroke-width="1.9"/><path d="M0.95 4.25 V14.55 H11" fill="none" stroke="#3a384e" stroke-width="1.9" stroke-linecap="round"/></svg><div class="td" style="left:562.5px;top:409.99px;line-height:20px"><span style="letter-spacing:-0.85px">HTTP</span></div><div class="td" style="left:1210px;top:409.99px;line-height:20px;letter-spacing:0.05px">27/09/2021 11:29:40</div><div class="abtn" style="top:399.99px"><span class="abs" style="left:26.5px">ACTIONS</span></div><svg class="abs" style="left:1607px;top:415.59000000000003px" width="12.5" height="7.5" viewBox="0 0 12.5 7.5"><path d="M1.15 1.15 L6.25 6.35 L11.35 1.15" fill="none" stroke="#fff" stroke-width="2.3" stroke-linecap="round" stroke-linejoin="round"/></svg><div class="hl" style="top:448px"></div><svg class="abs" style="left:76px;top:468.72999999999996px" width="15" height="15" viewBox="0 0 15 15"><circle cx="7.5" cy="7.5" r="7.3" fill="#5fd4b7"/><path d="M4.2 7.6 L6.5 9.8 L10.8 5.4" fill="none" stroke="#fff" stroke-width="1.9" stroke-linecap="round" stroke-linejoin="round"/></svg><div class="td nm" style="left:169.5px;top:455.53px;line-height:20px;letter-spacing:0.642px">bench-uptream</div><div class="td id" style="left:169.5px;top:476.03px;line-height:20px;letter-spacing:-0.08px">ID: 3eb291ec5985490c497045240...</div><svg class="abs" style="left:384.44999999999993px;top:477.03px" width="16" height="16" viewBox="0 0 16 16"><rect x="4.6" y="1.4" width="9.45" height="9.6" rx="1.3" fill="none" stroke="#45435c" stroke-width="1.9"/><path d="M0.95 4.25 V14.55 H11" fill="none" stroke="#3a384e" stroke-width="1.9" stroke-linecap="round"/></svg><div class="td" style="left:562.5px;top:466.03px;line-height:20px"><span style="letter-spacing:-0.85px">HTTP</span></div><div class="td" style="left:1210px;top:466.03px;line-height:20px;letter-spacing:0.05px">04/08/2021 16:09:46</div><div class="abtn" style="top:456.03px"><span class="abs" style="left:26.5px">ACTIONS</span></div><svg class="abs" style="left:1607px;top:471.63px" width="12.5" height="7.5" viewBox="0 0 12.5 7.5"><path d="M1.15 1.15 L6.25 6.35 L11.35 1.15" fill="none" stroke="#fff" stroke-width="2.3" stroke-linecap="round" stroke-linejoin="round"/></svg><div class="hl" style="top:504px"></div><svg class="abs" style="left:76px;top:524.77px" width="15" height="15" viewBox="0 0 15 15"><circle cx="7.5" cy="7.5" r="7.3" fill="#5fd4b7"/><path d="M4.2 7.6 L6.5 9.8 L10.8 5.4" fill="none" stroke="#fff" stroke-width="1.9" stroke-linecap="round" stroke-linejoin="round"/></svg><div class="td nm" style="left:169.5px;top:511.57px;line-height:20px;letter-spacing:-0.254px">Go Plugin API - JWT Parse</div><div class="td id" style="left:169.5px;top:532.0699999999999px;line-height:20px;letter-spacing:0.023px">ID: ed445bb83a914ad17714378ea...</div><svg class="abs" style="left:389.15px;top:533.0699999999999px" width="16" height="16" viewBox="0 0 16 16"><rect x="4.6" y="1.4" width="9.45" height="9.6" rx="1.3" fill="none" stroke="#45435c" stroke-width="1.9"/><path d="M0.95 4.25 V14.55 H11" fill="none" stroke="#3a384e" stroke-width="1.9" stroke-linecap="round"/></svg><div class="td" style="left:562.5px;top:522.0699999999999px;line-height:20px"><span style="letter-spacing:-0.85px">HTTP</span></div><div class="td" style="left:1210px;top:522.0699999999999px;line-height:20px;letter-spacing:0.05px">24/06/2021 11:01:46</div><div class="abtn" style="top:512.0699999999999px"><span class="abs" style="left:26.5px">ACTIONS</span></div><svg class="abs" style="left:1607px;top:527.67px" width="12.5" height="7.5" viewBox="0 0 12.5 7.5"><path d="M1.15 1.15 L6.25 6.35 L11.35 1.15" fill="none" stroke="#fff" stroke-width="2.3" stroke-linecap="round" stroke-linejoin="round"/></svg><div class="hl" style="top:560px"></div><svg class="abs" style="left:76px;top:580.8100000000001px" width="15" height="15" viewBox="0 0 15 15"><circle cx="7.5" cy="7.5" r="7.3" fill="#5fd4b7"/><path d="M4.2 7.6 L6.5 9.8 L10.8 5.4" fill="none" stroke="#fff" stroke-width="1.9" stroke-linecap="round" stroke-linejoin="round"/></svg><div class="td nm" style="left:169.5px;top:567.61px;line-height:20px;letter-spacing:0.132px">Go Plugin API (No Auth)</div><div class="td id" style="left:169.5px;top:588.11px;line-height:20px;letter-spacing:0.014px">ID: 4ae0dc21a29143267bf823e26...</div><svg class="abs" style="left:384.44999999999993px;top:589.11px" width="16" height="16" viewBox="0 0 16 16"><rect x="4.6" y="1.4" width="9.45" height="9.6" rx="1.3" fill="none" stroke="#45435c" stroke-width="1.9"/><path d="M0.95 4.25 V14.55 H11" fill="none" stroke="#3a384e" stroke-width="1.9" stroke-linecap="round"/></svg><div class="td" style="left:562.5px;top:578.11px;line-height:20px"><span style="letter-spacing:-0.85px">HTTP</span></div><div class="td" style="left:1210px;top:578.11px;line-height:20px;letter-spacing:0.05px">03/06/2021 16:55:14</div><div class="abtn" style="top:568.11px"><span class="abs" style="left:26.5px">ACTIONS</span></div><svg class="abs" style="left:1607px;top:583.71px" width="12.5" height="7.5" viewBox="0 0 12.5 7.5"><path d="M1.15 1.15 L6.25 6.35 L11.35 1.15" fill="none" stroke="#fff" stroke-width="2.3" stroke-linecap="round" stroke-linejoin="round"/></svg><div class="hl" style="top:616px"></div></div>
<div class="abs" style="left:1821.5px;top:887px;width:157px;height:41px;border-radius:21px;background:#fff;overflow:hidden"><div class="abs" style="left:39px;top:0;width:39px;height:41px;background:#5fd4b7"></div><div class="abs" style="left:0.0px;top:0;width:39px;line-height:41px;text-align:center;font-weight:bold;font-size:14.5px;color:#2a2838">1</div><div class="abs" style="left:39.25px;top:0;width:39px;line-height:41px;text-align:center;font-weight:bold;font-size:14.5px;color:#fff">2</div><div class="abs" style="left:78.5px;top:0;width:39px;line-height:41px;text-align:center;font-weight:bold;font-size:14.5px;color:#2a2838">3</div><div class="abs" style="left:117.75px;top:0;width:39px;line-height:41px;text-align:center;font-weight:bold;font-size:14.5px;color:#2a2838">4</div></div>
</body></html>
